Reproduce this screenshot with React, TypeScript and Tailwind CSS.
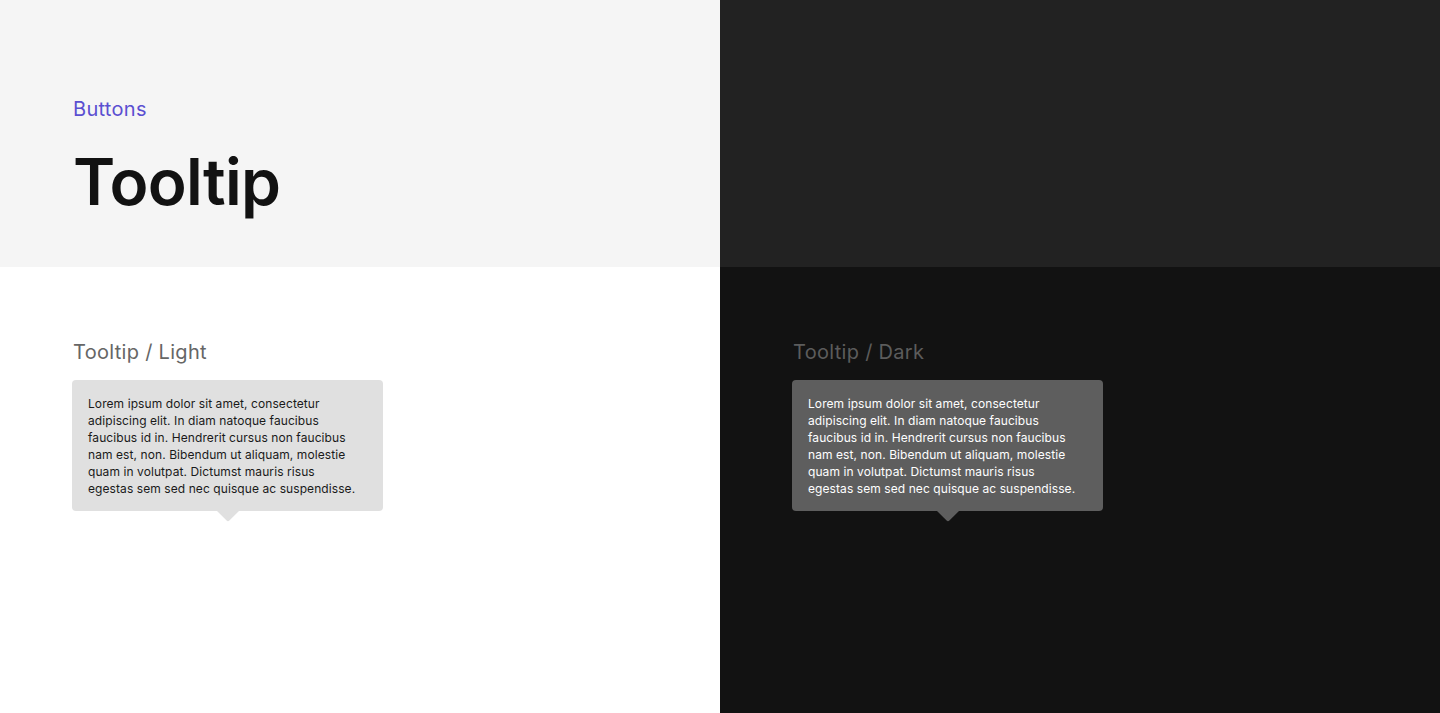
const lines = [
  'Lorem ipsum dolor sit amet, consectetur',
  'adipiscing elit. In diam natoque faucibus',
  'faucibus id in. Hendrerit cursus non faucibus',
  'nam est, non. Bibendum ut aliquam, molestie',
  'quam in volutpat. Dictumst mauris risus',
  'egestas sem sed nec quisque ac suspendisse.',
];

function Tooltip({ dark }: { dark?: boolean }) {
  return (
    <div className="relative w-[311px]">
      <div
        className={`rounded-[4px] px-4 pt-[15px] pb-[14px] text-[12px] leading-[17px] tracking-[0.08px] ${
          dark ? 'bg-[#5e5e5e] text-white' : 'bg-[#e0e0e0] text-[#1a1a1a]'
        }`}
      >
        {lines.map((l) => (
          <p key={l} className="whitespace-nowrap">
            {l}
          </p>
        ))}
      </div>
      {/* arrow */}
      <svg
        className="absolute left-1/2 top-full -translate-x-1/2"
        width="22"
        height="11"
        viewBox="0 0 22 11"
      >
        <path
          d="M0 0 L22 0 L12.4 9.6 Q11 11 9.6 9.6 Z"
          fill={dark ? '#5e5e5e' : '#e0e0e0'}
        />
      </svg>
    </div>
  );
}

function Section({ title, dark }: { title: string; dark?: boolean }) {
  return (
    <div className={`pl-[72px] pt-[73px] ${dark ? 'bg-[#121212]' : 'bg-white'}`}>
      <h2
        className={`pl-px text-[20px] leading-6 tracking-[0.3px] ${
          dark ? 'text-[#5c5c5c]' : 'text-[#666666]'
        }`}
      >
        {title}
      </h2>
      <div className="mt-[16px]">
        <Tooltip dark={dark} />
      </div>
    </div>
  );
}

export default function App() {
  return (
    <div className="grid h-[713px] w-[1440px] grid-cols-2 grid-rows-[267px_1fr] font-['Inter',sans-serif]">
      {/* Header */}
      <div className="bg-[#f5f5f5] pl-[73px] pt-[97px]">
        <p className="text-[20px] leading-6 tracking-[0.3px] text-[#5b4fd1]">Buttons</p>
        <h1 className="mt-[29px] text-[64px] leading-[64px] font-semibold tracking-[-0.7px] text-[#121212]">
          Tooltip
        </h1>
      </div>
      <div className="bg-[#222222]" />

      <Section title="Tooltip / Light" />
      <Section title="Tooltip / Dark" dark />
    </div>
  );
}
